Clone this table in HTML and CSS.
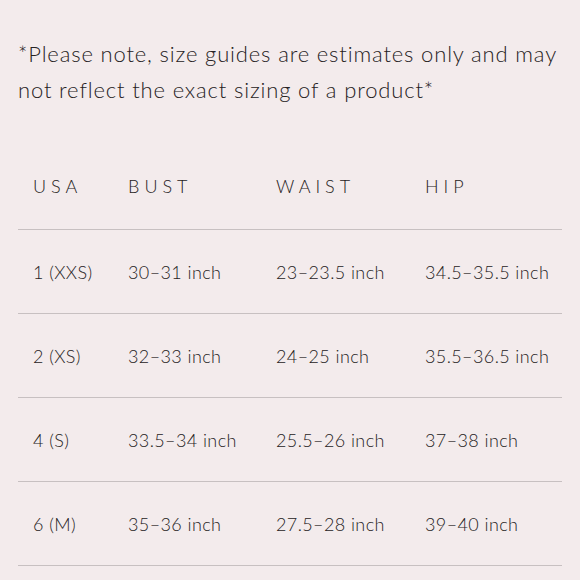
FILE: index.html
```html
<!DOCTYPE html>
<html>
<head>
<meta charset="utf-8">
<link rel="stylesheet" href="styles.css">
</head>
<body>
<div class="page">
  <p class="note">*Please note, size guides are estimates only and may not reflect the exact sizing of a product*</p>
  <div class="table">
    <div class="row head"><span>USA</span><span>BUST</span><span>WAIST</span><span>HIP</span></div>
    <div class="row"><span>1 (XXS)</span><span>30–31 inch</span><span>23–23.5 inch</span><span>34.5–35.5 inch</span></div>
    <div class="row"><span>2 (XS)</span><span>32–33 inch</span><span>24–25 inch</span><span>35.5–36.5 inch</span></div>
    <div class="row"><span>4 (S)</span><span>33.5–34 inch</span><span>25.5–26 inch</span><span>37–38 inch</span></div>
    <div class="row"><span>6 (M)</span><span>35–36 inch</span><span>27.5–28 inch</span><span>39–40 inch</span></div>
  </div>
</div>
</body>
</html>
```
FILE: styles.css
```css
html, body {
  margin: 0;
  padding: 0;
  background: #f3ebec;
}
.page {
  width: 580px;
  height: 580px;
  overflow: hidden;
  box-sizing: border-box;
  padding: 36px 18px 0 18px;
  font-family: "Lato", "Liberation Sans", sans-serif;
  font-weight: 300;
  color: #262223;
}
.note {
  margin: 0 0 38px 0;
  font-size: 22px;
  line-height: 36px;
  letter-spacing: 0.85px;
}
.row {
  display: grid;
  grid-template-columns: 95px 148px 149px 1fr;
  box-sizing: border-box;
  height: 84px;
  align-items: center;
  padding-left: 15px;
  border-bottom: 1px solid #c7c0c1;
  font-size: 18px;
  letter-spacing: 0.4px;
}
.row.head {
  font-size: 18px;
  letter-spacing: 5px;
  padding-bottom: 3px;
}
```
